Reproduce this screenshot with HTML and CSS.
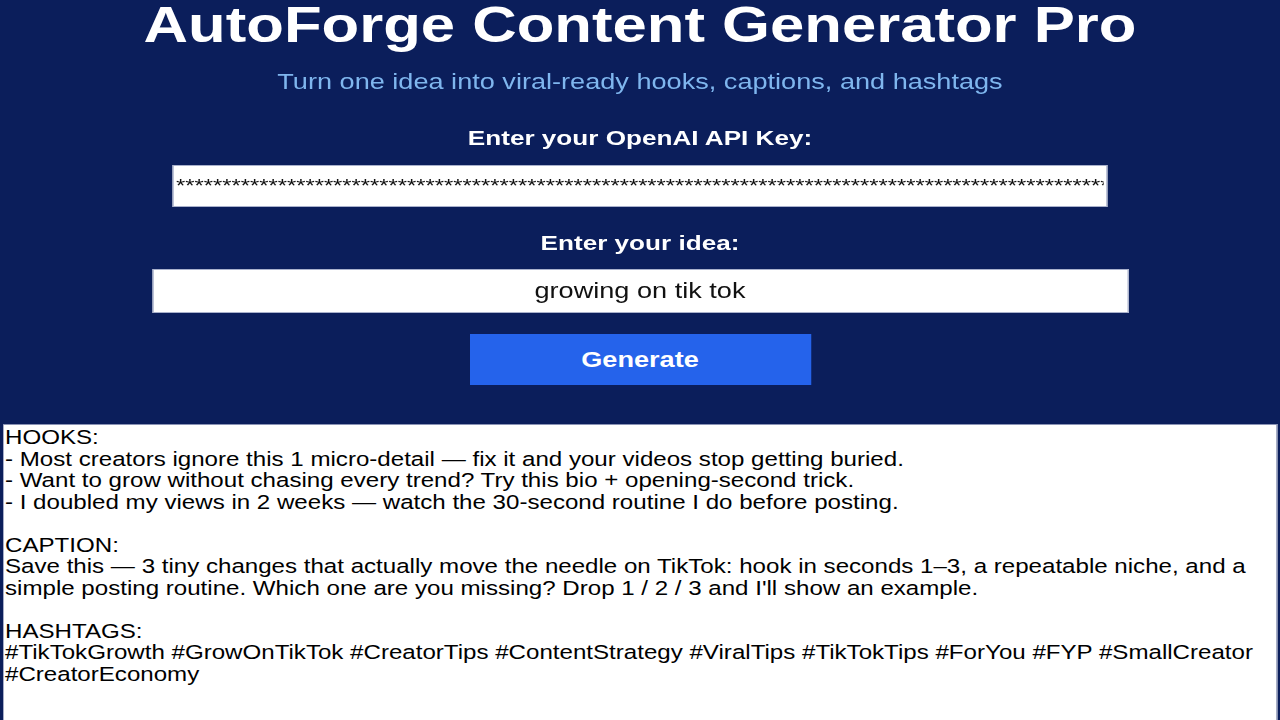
FILE: index.html
```html
<!DOCTYPE html>
<html lang="en">
<head>
  <meta charset="UTF-8" />
  <meta name="viewport" content="width=device-width, initial-scale=1" />
  <title>AutoForge Content Generator Pro</title>
  <link rel="stylesheet" href="styles.css">
</head>
<body>

  <div class="page">
    <h1 class="title">AutoForge Content Generator Pro</h1>
    <p class="subtitle">Turn one idea into viral-ready hooks, captions, and hashtags</p>

    <label class="field-label" for="apiKey">Enter your OpenAI API Key:</label>
    <input class="field field-key" id="apiKey" type="text" value="**************************************************************************************************************" />

    <label class="field-label label-idea" for="idea">Enter your idea:</label>
    <input class="field field-idea" id="idea" type="text" value="growing on tik tok" autofocus />

    <button class="generate" id="generateBtn">Generate</button>

    <!-- resultado -->
<pre class="output" id="output">HOOKS:
- Most creators ignore this 1 micro-detail — fix it and your videos stop getting buried.
- Want to grow without chasing every trend? Try this bio + opening-second trick.
- I doubled my views in 2 weeks — watch the 30‑second routine I do before posting.

CAPTION:
Save this — 3 tiny changes that actually move the needle on TikTok: hook in seconds 1–3, a repeatable niche, and a
simple posting routine. Which one are you missing? Drop 1 / 2 / 3 and I'll show an example.

HASHTAGS:
#TikTokGrowth #GrowOnTikTok #CreatorTips #ContentStrategy #ViralTips #TikTokTips #ForYou #FYP #SmallCreator
#CreatorEconomy</pre>
  </div>

  <script>
    const idea = document.getElementById('idea');
    idea.focus();
    idea.setSelectionRange(idea.value.length, idea.value.length);
  </script>

</body>
</html>
```

FILE: styles.css
```css
/* pagina inteira */
html, body {
  margin: 0;
  height: 100%;
  overflow: hidden;
  background: #0b1e5b;
}

body {
  font-family: "Liberation Sans", Arial, sans-serif;
  color: #fff;
}

/* layout desenhado em 1024 e esticado na horizontal */
.page {
  width: 1024px;
  display: flex;
  flex-direction: column;
  align-items: center;
  text-align: center;
  transform: scaleX(1.25);
  transform-origin: 0 0;
}

.title {
  font-size: 49.3px;
  line-height: 46px;
  font-weight: bold;
  margin: 2px 0 0;
}

.subtitle {
  font-size: 21.7px;
  line-height: 24px;
  color: #7fb6ee;
  margin: 22px 0 0;
}

.field-label {
  font-size: 20.9px;
  line-height: 24px;
  font-weight: bold;
  margin-top: 32px;
}

.label-idea {
  margin-top: 24px;
}

.field {
  box-sizing: border-box;
  font-family: "Liberation Sans", Arial, sans-serif;
  font-size: 21.7px;
  color: #111;
  background: #fff;
  border: 1px solid #a9b1cc;
  padding: 0 2px;
  text-align: center;
  outline: none;
}

.field-key {
  width: 748px;
  height: 42px;
  margin-top: 15px;
  font-size: 19px;
  text-align: left;
}

.field-idea {
  width: 781px;
  height: 44px;
  margin-top: 14px;
  caret-color: #000;
}

.generate {
  width: 273px;
  height: 51px;
  margin-top: 21px;
  background: #2563eb;
  color: #fff;
  border: none;
  font-family: "Liberation Sans", Arial, sans-serif;
  font-size: 21.7px;
  font-weight: bold;
  cursor: pointer;
}

.output {
  align-self: stretch;
  box-sizing: border-box;
  height: 320px;
  margin: 39px 2px 0;
  padding: 2px 1px;
  background: #fff;
  color: #000;
  border: 1px solid #8a93b5;
  font-family: "Liberation Sans", Arial, sans-serif;
  font-size: 19.3px;
  line-height: 21.5px;
  text-align: left;
  white-space: pre;
  overflow: hidden;
}
```
